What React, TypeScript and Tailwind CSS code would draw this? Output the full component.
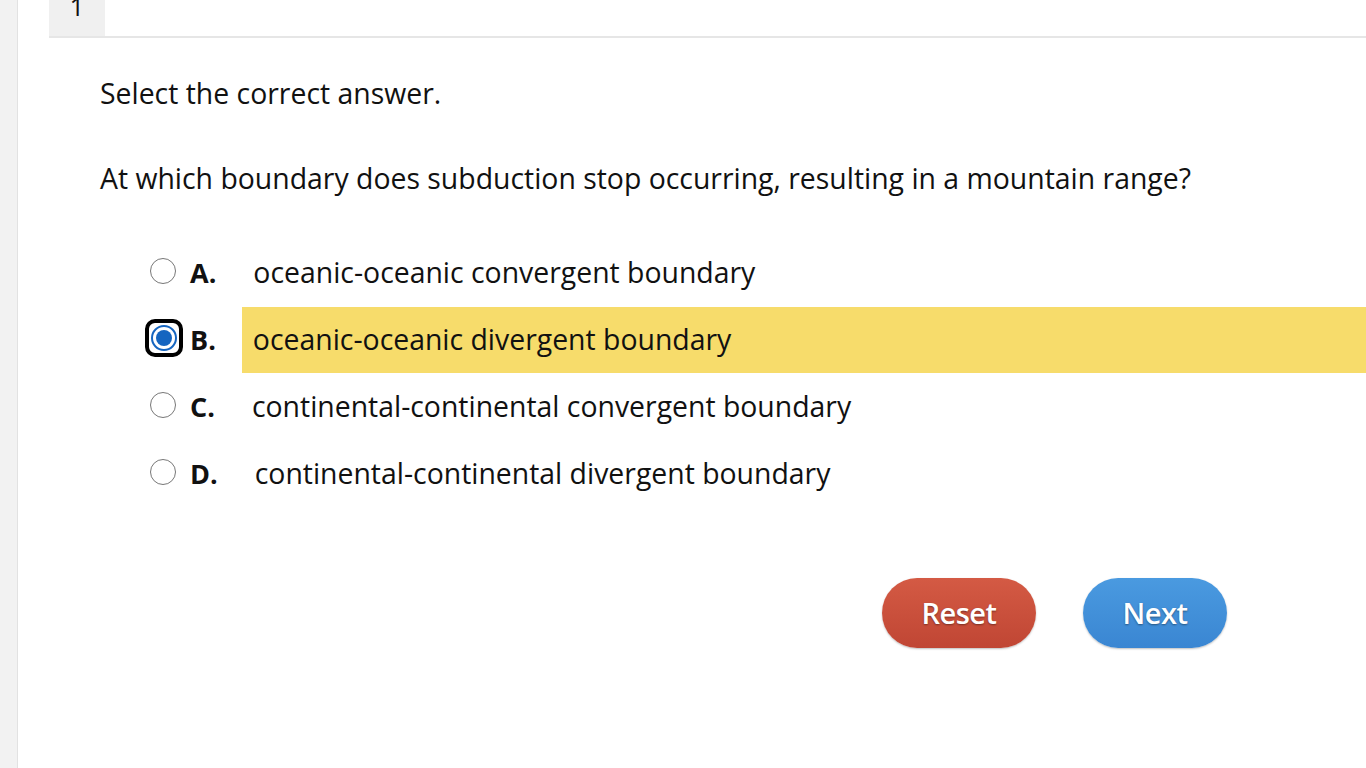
import { useState } from "react";

const options = [
  { key: "A", text: "oceanic-oceanic convergent boundary" },
  { key: "B", text: "oceanic-oceanic divergent boundary" },
  { key: "C", text: "continental-continental convergent boundary" },
  { key: "D", text: "continental-continental divergent boundary" },
];

export default function App() {
  const [selected, setSelected] = useState("B");

  return (
    <div
      className="flex h-[768px] w-[1366px] overflow-hidden bg-white text-[#111]"
      style={{ fontFamily: '"Open Sans", sans-serif' }}
    >
      {/* left gutter */}
      <div className="w-[18px] shrink-0 border-r border-[#e2e2e2] bg-[#f2f2f2]" />

      <div className="flex flex-1 flex-col pl-[31px]">
        {/* tab strip */}
        <div className="flex h-[38px] border-b-2 border-[#e6e6e6]">
          <div className="flex w-[56px] items-end justify-center bg-[#f0f0f0] pb-[17px] text-[26px] leading-none">
            <span>1</span>
          </div>
        </div>

        <div className="pl-[51px]">
          <p className="mt-[37px] text-[28.4px] leading-[36px]">Select the correct answer.</p>
          <p className="mt-[49px] text-[28.4px] leading-[36px]">
            At which boundary does subduction stop occurring, resulting in a mountain range?
          </p>

          <div className="mt-[43px] flex flex-col pl-[50px]">
            {options.map((o) => {
              const active = selected === o.key;
              return (
                <div
                  key={o.key}
                  className="flex h-[67px] cursor-pointer items-center"
                  onClick={() => setSelected(o.key)}
                >
                  <div className="flex w-[40px] shrink-0 items-center">
                    {active ? (
                      <span className="-ml-[5px] -mt-[4px] flex h-[38px] w-[38px] items-center justify-center rounded-[10px] border-[4px] border-black">
                        <span className="flex h-[26px] w-[26px] items-center justify-center rounded-full border-2 border-[#1565c0] bg-white">
                          <span className="h-[16px] w-[16px] rounded-full bg-[#1565c0]" />
                        </span>
                      </span>
                    ) : (
                      <span className="-mt-[4px] h-[26px] w-[26px] rounded-full border-[1.5px] border-[#777] bg-white" />
                    )}
                  </div>
                  <span className="text-[27px] font-bold leading-none">{o.key}.</span>
                  <div
                    className={
                      "ml-[26px] flex h-[66px] flex-1 items-center pl-[11px] " +
                      (active ? "bg-[#f7dc6b]" : "")
                    }
                  >
                    <span className="text-[28.4px] leading-none">{o.text}</span>
                  </div>
                </div>
              );
            })}
          </div>

          <div className="mt-[71px] flex justify-end gap-[47px] pr-[139px]">
            <button className="h-[70px] w-[154px] rounded-full bg-gradient-to-b from-[#d45a44] to-[#c04634] text-[29px] font-semibold tracking-[-0.5px] text-white shadow-[0_1px_2px_rgba(0,0,0,0.25)] [text-shadow:0_1px_2px_rgba(0,0,0,0.4)]">
              Reset
            </button>
            <button className="h-[70px] w-[144px] rounded-full bg-gradient-to-b from-[#4a9ae0] to-[#3a86d2] text-[29px] font-semibold tracking-[-0.5px] text-white shadow-[0_1px_2px_rgba(0,0,0,0.25)] [text-shadow:0_1px_2px_rgba(0,0,0,0.4)]">
              Next
            </button>
          </div>
        </div>
      </div>
    </div>
  );
}
